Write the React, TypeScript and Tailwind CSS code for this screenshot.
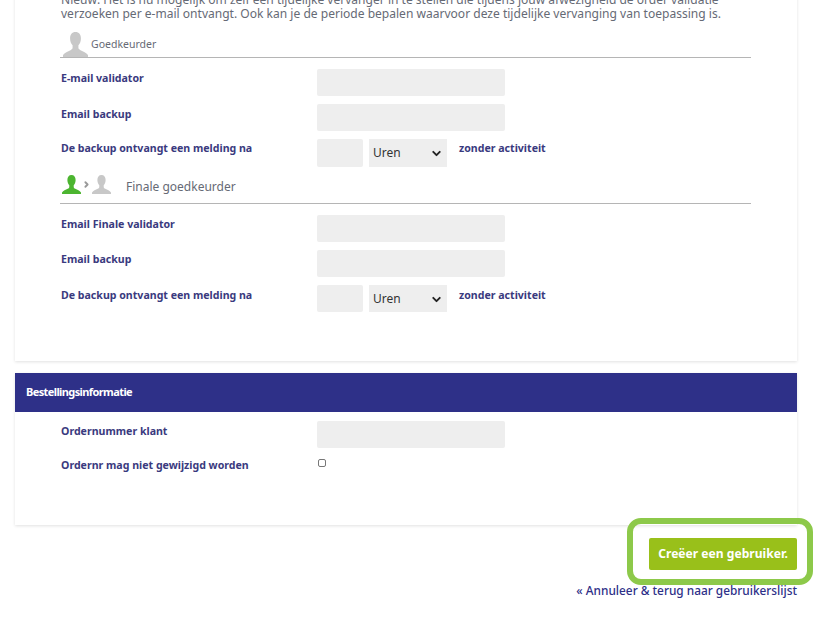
import { ChevronDown } from "lucide-react";

const Person = ({ className }: { className: string }) => (
  <svg viewBox="0 0 24 24" className={className} fill="currentColor">
    <path d="M12 0c3.4 0 5.2 2.600 5.200 6.200 0 2.800-1 5.200-2.400 6.600v2.400c0 1 .7 1.600 2 2.200 2.600 1.100 5.600 2.400 7.200 4.600v2H0v-2c1.600-2.200 4.600-3.500 7.200-4.600 1.300-.6 2-1.200 2-2.200v-2.400C7.800 11.400 6.800 9 6.800 6.200 6.800 2.600 8.600 0 12 0z" />
  </svg>
);

const Label = ({ children, low }: { children: string; low?: boolean }) => (
  <label className={`w-[256px] shrink-0 text-[10.6px] leading-[15px] font-bold text-[#3a3a7e] ${low ? "pt-[3px]" : "pt-[2px]"}`}>
    {children}
  </label>
);

const TextRow = ({ label, low }: { label: string; low?: boolean }) => (
  <div className="flex h-[27px] items-start">
    <Label low={low}>{label}</Label>
    <input className="h-[27px] w-[188px] rounded-[2px] bg-[#eeeeee]" />
  </div>
);

const BackupRow = ({ low }: { low?: boolean }) => (
  <div className={`flex items-start ${low ? "h-[27px]" : "h-[28px]"}`}>
    <Label low={low}>De backup ontvangt een melding na</Label>
    <input className="h-full w-[46px] rounded-[2px] bg-[#eeeeee]" />
    <div className="relative ml-[6px] h-full w-[78px] bg-[#eeeeee] pt-[5px] pl-[4px] text-[12px] leading-[17px] text-[#333333]">
      Uren
      <ChevronDown size={13} strokeWidth={3.5} className="absolute top-[8px] right-[4px] text-[#222222]" />
    </div>
    <span className={`ml-[12px] text-[10.6px] leading-[15px] font-bold text-[#3a3a7e] ${low ? "pt-[3px]" : "pt-[2px]"}`}>
      zonder activiteit
    </span>
  </div>
);

export default function App() {
  return (
    <div className="relative h-[619px] w-[829px] overflow-hidden bg-white font-['Noto_Sans',sans-serif]">
      {/* gebruiker formulier */}
      <div className="mx-[15px] -mt-[7px] h-[368px] w-[782px] bg-white pt-0 pl-[46px] shadow-[0_1px_3px_rgba(0,0,0,0.12)]">
        <p className="w-[700px] text-[12.05px] leading-[14px] text-[#666a75]">
          Nieuw: Het is nu mogelijk om zelf een tijdelijke vervanger in te stellen die tijdens jouw afwezigheid de order validatie verzoeken per e-mail ontvangt. Ook kan je de periode bepalen waarvoor deze tijdelijke vervanging van toepassing is.
        </p>
        <div className="mt-[10px] -ml-[1px] flex h-[27px] w-[691px] items-end border-b border-[#b5b5b5]">
          <Person className="ml-[3px] h-[25px] w-[25px] text-[#c8c8c8]" />
          <span className="mb-[6px] ml-[3px] text-[10.5px] leading-[14px] text-[#666a75]">Goedkeurder</span>
        </div>
        <div className="mt-[11px] flex flex-col gap-[8px]">
          <TextRow label="E-mail validator" />
          <TextRow label="Email backup" low />
          <BackupRow />
        </div>
        <div className="mt-[4px] -ml-[1px] flex h-[33px] w-[691px] items-start border-b border-[#b5b5b5] pt-[4px]">
          <Person className="ml-[2px] h-[19px] w-[19px] text-[#4cb530]" />
          <ChevronDown size={9} strokeWidth={5} className="mt-[5px] ml-[1px] -rotate-90 text-[#999999]" />
          <Person className="ml-[1px] h-[19px] w-[19px] text-[#c8c8c8]" />
          <span className="mt-[4px] ml-[15px] text-[12px] leading-[16px] text-[#666a75]">Finale goedkeurder</span>
        </div>
        <div className="mt-[11px] flex flex-col gap-[8px]">
          <TextRow label="Email Finale validator" />
          <TextRow label="Email backup" />
          <BackupRow low />
        </div>
      </div>

      {/* bestellingsinformatie */}
      <div className="mx-[15px] mt-[12px] h-[152px] w-[782px] bg-white shadow-[0_1px_3px_rgba(0,0,0,0.12)]">
        <div className="flex h-[39px] items-center bg-[#2e3088] pl-[11px] text-[11px] font-bold tracking-[-0.6px] text-white">
          Bestellingsinformatie
        </div>
        <div className="mt-[9px] flex flex-col gap-[8px] pl-[46px]">
          <TextRow label="Ordernummer klant" low />
          <div className="flex h-[27px] items-start">
            <Label>Ordernr mag niet gewijzigd worden</Label>
            <input type="checkbox" className="mt-[3px] ml-[1px] h-[8px] w-[8px] appearance-none rounded-[2px] border border-[#777777] bg-white" />
          </div>
        </div>
      </div>

      {/* acties */}
      <div className="mt-[13px] mr-[32px] flex flex-col items-end">
        <button className="h-[32px] w-[148px] rounded-[2px] bg-[#99c01a] text-[12.1px] font-bold text-white">
          Creëer een gebruiker.
        </button>
        <a className="mt-[12px] text-[11.85px] leading-[16px] font-medium text-[#2e3088]">« Annuleer &amp; terug naar gebruikerslijst</a>
      </div>

      {/* groene markering */}
      <div className="absolute top-[518px] left-[627px] h-[67px] w-[186px] rounded-[14px] border-[6px] border-[#8dc94a]" />
    </div>
  );
}
